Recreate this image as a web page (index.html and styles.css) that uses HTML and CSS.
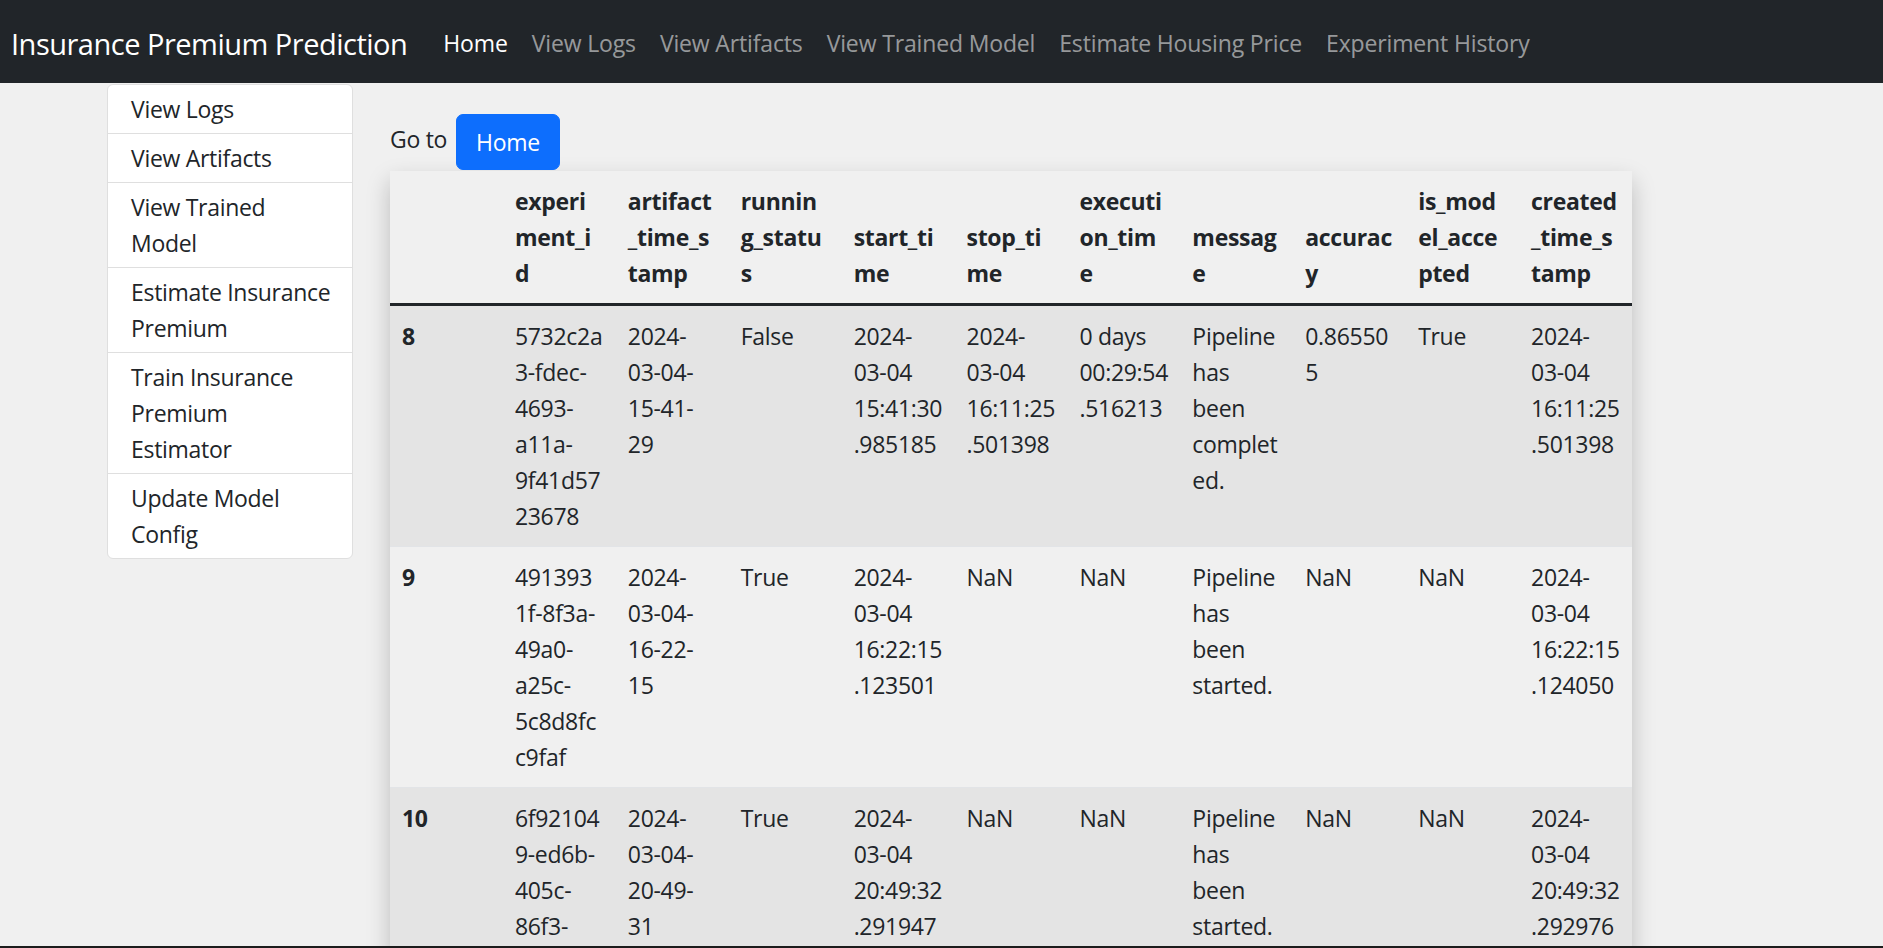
FILE: index.html
```html
<!DOCTYPE html>
<html lang="en">
<head>
<meta charset="utf-8">
<title>Insurance Premium Prediction</title>
<link rel="stylesheet" href="styles.css">
</head>
<body>
<nav class="navbar">
  <a class="brand" href="#">Insurance Premium Prediction</a>
  <ul class="nav-links">
    <li><a class="nav-link active" href="#">Home</a></li>
    <li><a class="nav-link" href="#">View Logs</a></li>
    <li><a class="nav-link" href="#">View Artifacts</a></li>
    <li><a class="nav-link" href="#">View Trained Model</a></li>
    <li><a class="nav-link" href="#">Estimate Housing Price</a></li>
    <li><a class="nav-link" href="#">Experiment History</a></li>
  </ul>
</nav>

<div class="page">
  <aside class="sidebar">
    <ul class="list-group">
      <li class="list-item"><a href="#">View Logs</a></li>
      <li class="list-item"><a href="#">View Artifacts</a></li>
      <li class="list-item"><a href="#">View Trained<br>Model</a></li>
      <li class="list-item"><a href="#">Estimate Insurance<br>Premium</a></li>
      <li class="list-item"><a href="#">Train Insurance<br>Premium<br>Estimator</a></li>
      <li class="list-item"><a href="#">Update Model<br>Config</a></li>
    </ul>
  </aside>

  <main class="content">
    <div class="goto">
      <span class="goto-label">Go to</span>
      <a class="btn" href="#">Home</a>
    </div>

    <div class="table-card">
      <table class="history">
        <thead>
          <tr>
            <th></th>
            <th>experi<br>ment_i<br>d</th>
            <th>artifact<br>_time_s<br>tamp</th>
            <th>runnin<br>g_statu<br>s</th>
            <th>start_ti<br>me</th>
            <th>stop_ti<br>me</th>
            <th>executi<br>on_tim<br>e</th>
            <th>messag<br>e</th>
            <th>accurac<br>y</th>
            <th>is_mod<br>el_acce<br>pted</th>
            <th>created<br>_time_s<br>tamp</th>
          </tr>
        </thead>
        <tbody>
          <tr>
            <th>8</th>
            <td>5732c2a<br>3-fdec-<br>4693-<br>a11a-<br>9f41d57<br>23678</td>
            <td>2024-<br>03-04-<br>15-41-<br>29</td>
            <td>False</td>
            <td>2024-<br>03-04<br>15:41:30<br>.985185</td>
            <td>2024-<br>03-04<br>16:11:25<br>.501398</td>
            <td>0 days<br>00:29:54<br>.516213</td>
            <td>Pipeline<br>has<br>been<br>complet<br>ed.</td>
            <td>0.86550<br>5</td>
            <td>True</td>
            <td>2024-<br>03-04<br>16:11:25<br>.501398</td>
          </tr>
          <tr>
            <th>9</th>
            <td>491393<br>1f-8f3a-<br>49a0-<br>a25c-<br>5c8d8fc<br>c9faf</td>
            <td>2024-<br>03-04-<br>16-22-<br>15</td>
            <td>True</td>
            <td>2024-<br>03-04<br>16:22:15<br>.123501</td>
            <td>NaN</td>
            <td>NaN</td>
            <td>Pipeline<br>has<br>been<br>started.</td>
            <td>NaN</td>
            <td>NaN</td>
            <td>2024-<br>03-04<br>16:22:15<br>.124050</td>
          </tr>
          <tr>
            <th>10</th>
            <td>6f92104<br>9-ed6b-<br>405c-<br>86f3-</td>
            <td>2024-<br>03-04-<br>20-49-<br>31</td>
            <td>True</td>
            <td>2024-<br>03-04<br>20:49:32<br>.291947</td>
            <td>NaN</td>
            <td>NaN</td>
            <td>Pipeline<br>has<br>been<br>started.</td>
            <td>NaN</td>
            <td>NaN</td>
            <td>2024-<br>03-04<br>20:49:32<br>.292976</td>
          </tr>
        </tbody>
      </table>
    </div>
  </main>
</div>

<div class="screen-edge"></div>
</body>
</html>
```

FILE: styles.css
```css
html {
  scrollbar-width: none;
}

html::-webkit-scrollbar {
  display: none;
}

body {
  margin: 0;
  background: #f0f0f0;
  color: #212529;
  font-family: "Open Sans", "Noto Sans", "Liberation Sans", sans-serif;
  font-size: 23px;
  line-height: 36px;
  letter-spacing: -0.3px;
}

a {
  text-decoration: none;
  color: inherit;
}

/* ---------- navbar ---------- */
.navbar {
  display: flex;
  align-items: center;
  height: 83px;
  background: #212529;
  padding: 0 0 0 11px;
  box-sizing: border-box;
}

.brand {
  color: #ffffff;
  font-size: 29px;
  line-height: 45px;
  letter-spacing: -0.5px;
  margin-right: 24px;
  padding-top: 3px;
}

.nav-links {
  display: flex;
  list-style: none;
  margin: 0;
  padding: 0;
  padding-top: 3px;
}

.nav-link {
  display: block;
  padding: 0 12px;
  letter-spacing: -0.15px;
  color: rgba(255, 255, 255, 0.55);
}

.nav-link.active {
  color: #ffffff;
}

/* ---------- page layout ---------- */
.page {
  display: flex;
  align-items: flex-start;
  padding-left: 107px;
  gap: 37px;
}

.sidebar {
  width: 246px;
  flex: none;
  margin-top: 1px;
}

.list-group {
  list-style: none;
  margin: 0;
  padding: 0;
  background: #ffffff;
  border: 1px solid #dfdfdf;
  border-radius: 6px;
}

.list-item {
  padding: 6px 24px 6px 23px;
  border-top: 1px solid #dfdfdf;
  white-space: nowrap;
}

.list-item:first-child {
  border-top: none;
}

.content {
  flex: none;
  width: 1242px;
  padding-top: 31px;
}

.goto {
  display: flex;
  align-items: flex-start;
  gap: 9px;
  margin-bottom: 1px;
}

.goto-label {
  margin-top: 7px;
}

.btn {
  display: inline-block;
  padding: 9px 19px;
  border: 1px solid #0d6efd;
  border-radius: 7px;
  background: #0d6efd;
  color: #ffffff;
}

/* ---------- table ---------- */
.table-card {
  box-shadow: 0 10px 22px rgba(0, 0, 0, 0.22);
}

.history {
  width: 100%;
  table-layout: fixed;
  border-collapse: collapse;
  background: #f0f0f0;
}

.history th,
.history td {
  padding: 12px;
  text-align: left;
  white-space: nowrap;
  overflow: hidden;
  vertical-align: top;
}

.history th {
  font-weight: 700;
}

.history thead th {
  vertical-align: bottom;
  border-bottom: 3px solid #212529;
}

.history tbody tr {
  border-bottom: 1px solid #e2e4e7;
}

.history tbody tr:nth-child(odd) {
  background: #e4e4e4;
}

.screen-edge {
  position: fixed;
  left: 0;
  right: 0;
  bottom: 0;
  height: 2px;
  background: #1c1c1c;
}
```
